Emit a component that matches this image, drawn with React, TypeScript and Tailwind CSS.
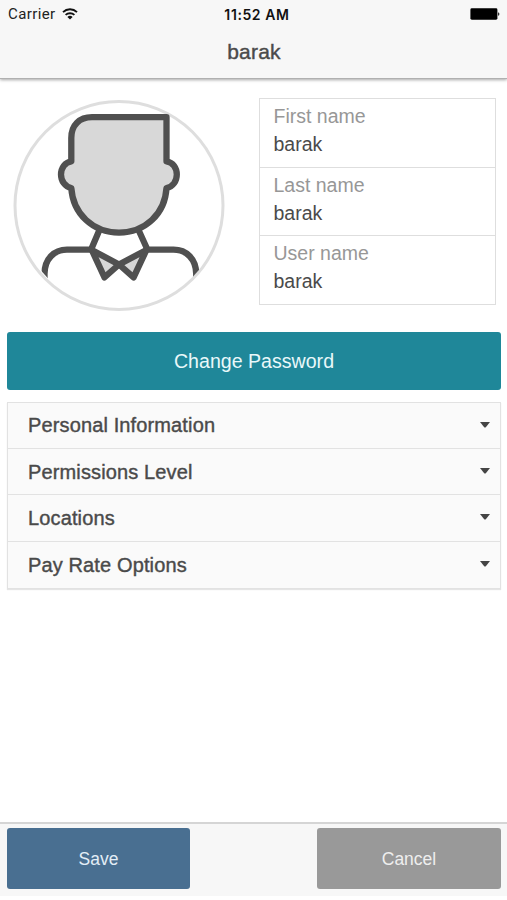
import { useState } from "react";

type Field = { label: string; value: string };

const FIELDS: Field[] = [
  { label: "First name", value: "barak" },
  { label: "Last name", value: "barak" },
  { label: "User name", value: "barak" },
];

const SECTIONS = ["Personal Information", "Permissions Level", "Locations", "Pay Rate Options"];

function WifiIcon() {
  return (
    <svg viewBox="0 0 16 12" className="h-3 w-4" fill="none" stroke="#111" strokeWidth="1.9">
      <path d="M1 4.1a10.2 10.2 0 0 1 14 0" />
      <path d="M3.6 6.9a6.5 6.5 0 0 1 8.8 0" />
      <path d="M8 11.6 5.4 9a3.8 3.8 0 0 1 5.2 0z" fill="#111" stroke="none" />
    </svg>
  );
}

function BatteryIcon() {
  return (
    <svg viewBox="0 0 30 12" className="h-3 w-[30px]">
      <rect x="0.4" y="0.3" width="27" height="11.4" rx="1.4" fill="#000" />
      <path d="M28 4.2c1.9.5 1.9 3.1 0 3.6z" fill="#333" />
    </svg>
  );
}

function Avatar() {
  return (
    <svg viewBox="0 0 212 212" className="size-[212px] shrink-0">
      <clipPath id="avatar-clip">
        <circle cx="106.7" cy="106.5" r="102.2" />
      </clipPath>
      <circle cx="106" cy="106.5" r="104" fill="#fff" stroke="#dedede" strokeWidth="3" />
      <g stroke="#505050" strokeWidth="6.3" strokeLinecap="round" strokeLinejoin="round" fill="none">
        <g clipPath="url(#avatar-clip)">
          <path d="M31.5 184V175C31.5 160 41 150.7 54 150.7H78L86 132" />
          <path d="M183.2 184V175C183.2 160 173.5 150.7 160.5 150.7H134.5L126 132" />
        </g>
        <path d="M78.8 151 106 165.5 91.4 178.3z" fill="#d8d8d8" />
        <path d="M133.4 151 106 165.5 120.6 178.3z" fill="#d8d8d8" />
        <path
          d="M58.3 62.3V39C58.3 26 66.5 18.2 79 18.2H153.5V62.3C160 63.3 163.8 69 163.8 75.5S160 87.8 153.5 89C152 115 132 133.6 106 133.6S60 115 58.3 89C52 87.8 48 82 48 75.5S52 63.3 58.3 62.3z"
          fill="#d8d8d8"
        />
      </g>
    </svg>
  );
}

export default function App() {
  const [openSection, setOpenSection] = useState<string | null>(null);

  return (
    <div className="flex h-[896px] flex-col bg-white font-['Liberation_Sans',Arial,sans-serif] text-[#4a4a4a]">
      <header className="h-[79px] border-b border-[#b0b0b0] bg-[#f7f7f7] shadow-[0_1px_3px_rgba(0,0,0,0.35)]">
        <div className="grid h-7 grid-cols-3 items-center pr-[7px] pl-2">
          <div className="flex items-center gap-1.5 font-[Roboto,sans-serif] text-[15px] text-[#222]">
            <span className="pt-px tracking-[0.4px]">Carrier</span>
            <WifiIcon />
          </div>
          <span className="pl-1.5 text-center font-[Inter,sans-serif] text-[14px] font-semibold tracking-[0.6px] text-[#111]">
            11:52 AM
          </span>
          <div className="flex justify-end">
            <BatteryIcon />
          </div>
        </div>
        <h1 className="mt-3 pl-px text-center text-[21px] leading-6 tracking-[0.2px] [-webkit-text-stroke:0.4px_#4a4a4a]">
          barak
        </h1>
      </header>

      <main className="flex-1 pr-1.5 pl-[7px]">
        <div className="flex justify-between pt-5 pr-[5px] pl-1.5">
          <Avatar />
          <div className="mt-[-1px] h-[207px] w-[237px] divide-y divide-[#dedede] border border-[#dedede]">
            {FIELDS.map((field) => (
              <div key={field.label} className="h-[68.5px] pt-[3px] pl-[13.5px] text-[19.5px] leading-7">
                <p className="text-[#979797]">{field.label}</p>
                <p>{field.value}</p>
              </div>
            ))}
          </div>
        </div>

        <button
          type="button"
          className="mt-[21px] block h-[57.5px] w-full rounded-[3px] bg-[#1f8799] pt-px text-[19.6px] text-[#e9f8fa]"
        >
          Change Password
        </button>

        <div className="mt-3 divide-y divide-[#e2e2e2] border border-[#e2e2e2] bg-[#fafafa] shadow-[0_1px_1px_rgba(0,0,0,0.1)]">
          {SECTIONS.map((section) => (
            <button
              key={section}
              type="button"
              onClick={() => setOpenSection(openSection === section ? null : section)}
              className="flex h-[46.4px] w-full items-center justify-between pr-2.5 pl-5 text-[20px] tracking-[0.13px] [-webkit-text-stroke:0.4px_#4a4a4a]"
            >
              {section}
              <svg viewBox="0 0 10 6" className="mb-px h-1.5 w-2.5" fill="#444">
                <path d="M0 0h10L5.8 5.2q-.8.8-1.6 0z" />
              </svg>
            </button>
          ))}
        </div>
      </main>

      <footer className="flex h-[74px] justify-between border-t-2 border-[#d5d5d5] bg-[#f7f7f7] pt-1 pr-1.5 pl-[7px] text-[17.5px]">
        <button type="button" className="h-[61px] w-[183px] rounded-[3px] bg-[#496f91] pt-0.5 text-[#e3edf6]">
          Save
        </button>
        <button type="button" className="h-[61px] w-[184px] rounded-[3px] bg-[#999999] pt-0.5 text-[#eeeeee]">
          Cancel
        </button>
      </footer>
    </div>
  );
}
